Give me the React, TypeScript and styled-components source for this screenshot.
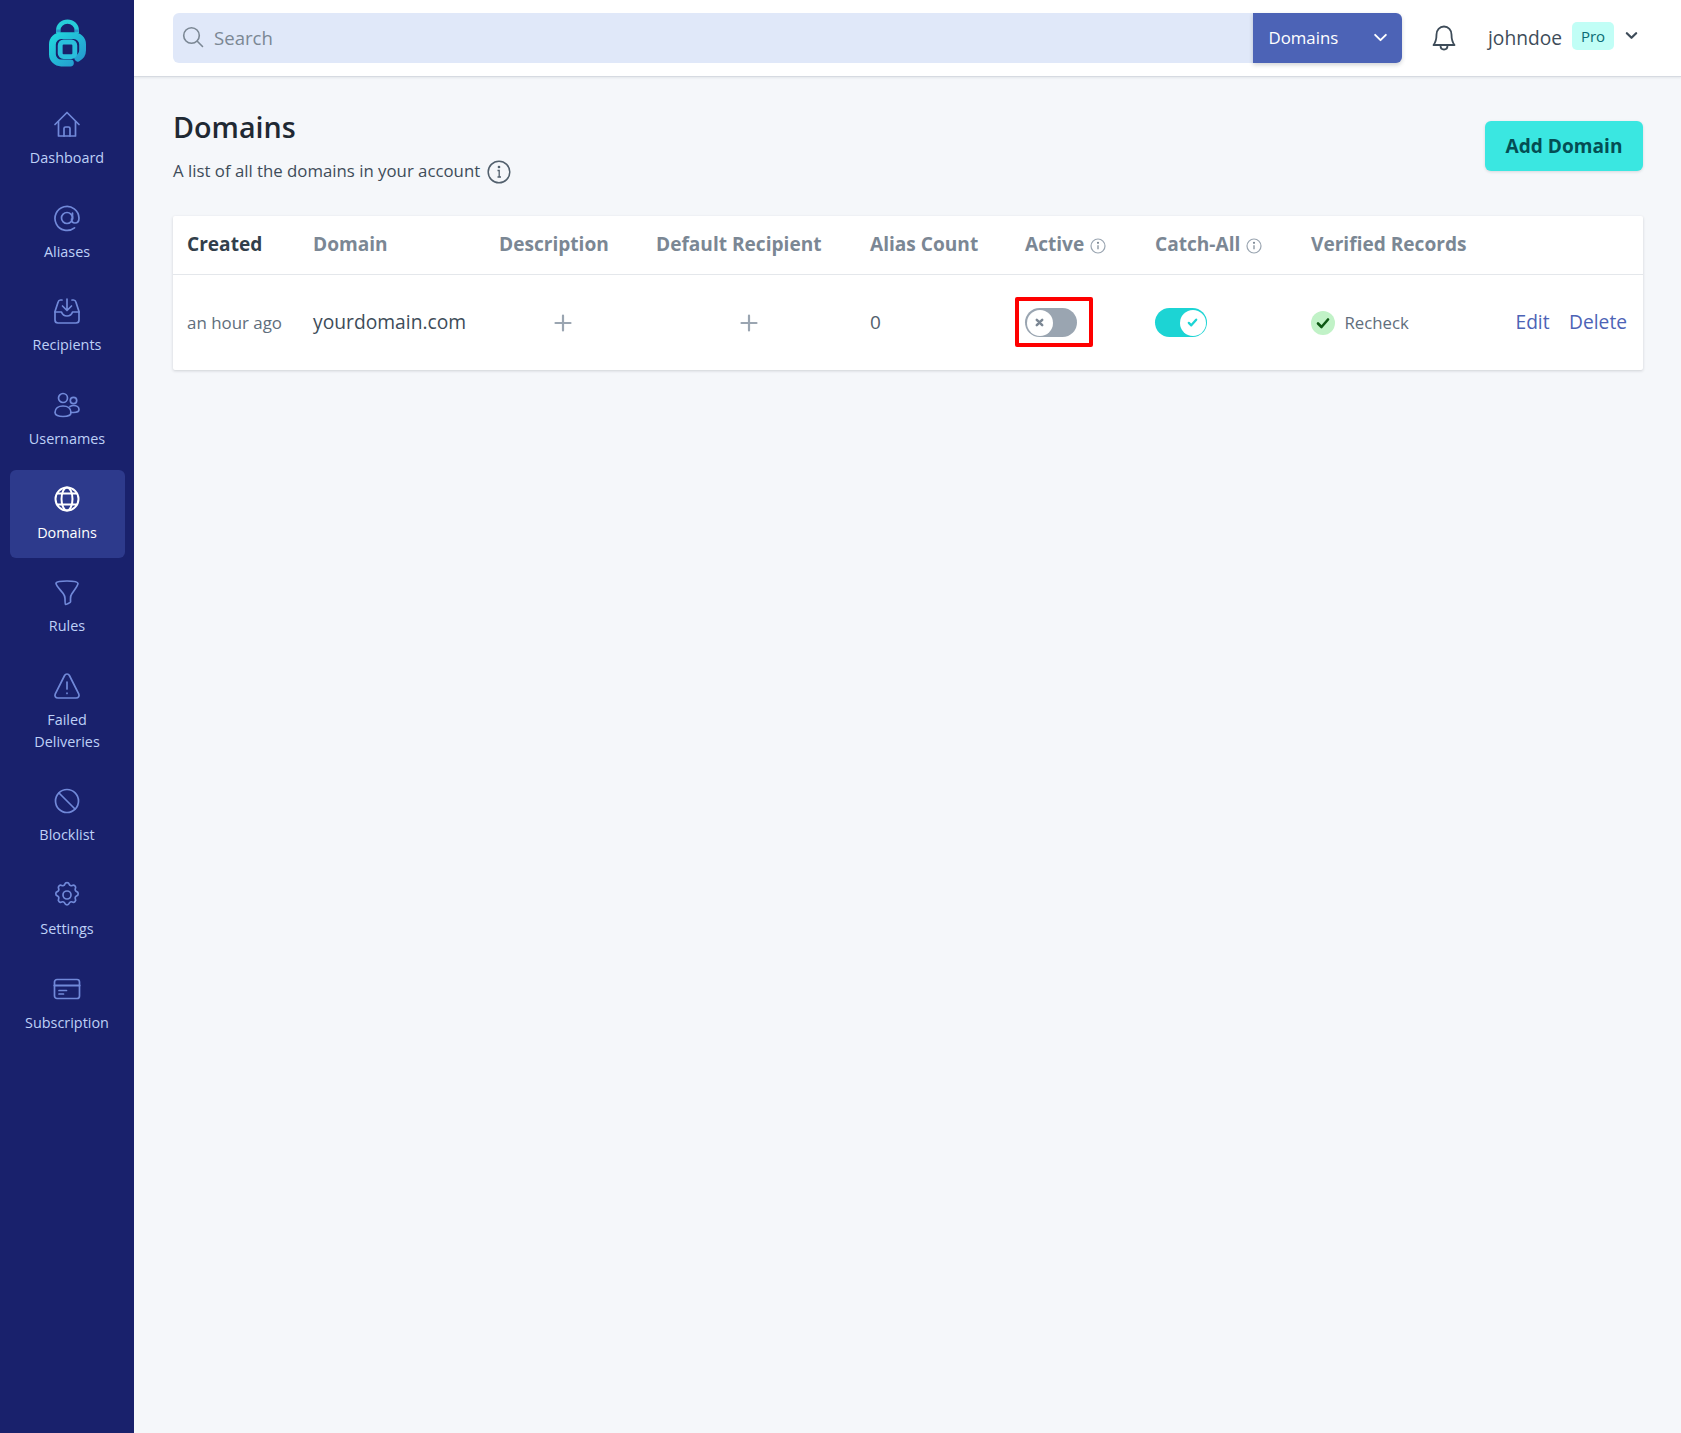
import React from "react";
import styled, { createGlobalStyle } from "styled-components";

const GlobalStyle = createGlobalStyle`
  html, body { margin: 0; padding: 0; background: #f5f7fa; }
  body { font-family: "Open Sans", "Liberation Sans", sans-serif; color: #1f2933; }
  * { box-sizing: border-box; }
`;

const line = { fill: "none", stroke: "currentColor", strokeWidth: 1.7, strokeLinecap: "round", strokeLinejoin: "round" } as const;

const NavIcon = ({ children }: { children: React.ReactNode }) => (
  <svg width="28" height="28" viewBox="0 0 28 28" {...line}>{children}</svg>
);

const navItems: { label: string; icon: React.ReactNode; active?: boolean }[] = [
  { label: "Dashboard", icon: <><path d="M2 14.500 14 2.500l12 12" /><path d="M5.500 11.500V26h17V11.500" /><path d="M11 26v-7.500a1.500 1.500 0 0 1 1.500-1.500h3a1.500 1.500 0 0 1 1.500 1.500V26" /></> },
  { label: "Aliases", icon: <><path d="M21.500 23.800A12 12 0 1 1 26 14c0 3-1.600 5-4 5s-3.500-1.600-3.500-4" /><circle cx="14" cy="14" r="5.500" /><path d="M19.500 9v6" /></> },
  { label: "Recipients", icon: <><path d="M9 3H7.500A2.500 2.500 0 0 0 5.200 4.800L2 14.500V23a3 3 0 0 0 3 3h18a3 3 0 0 0 3-3v-8.500L22.800 4.800A2.500 2.500 0 0 0 20.500 3H19" /><path d="M2 15h6.500c1 3 3 4 5.500 4s4.500-1 5.500-4H26" /><path d="M14 2v11M9.500 9l4.500 4.500L18.500 9" /></> },
  { label: "Usernames", icon: <><circle cx="10" cy="7" r="4.500" /><circle cx="20.500" cy="9.500" r="3.200" /><path d="M2 21.500c0-4 3.500-6.500 8-6.500s8 2.500 8 6.500c0 2.500-3.500 4-8 4s-8-1.500-8-4Z" /><path d="M17 15.500c1-.6 2.300-1 3.500-1 3.300 0 5.500 1.800 5.500 4 0 1.800-2.200 3-5.500 3h-2.800" /></> },
  { label: "Domains", active: true, icon: <><circle cx="14" cy="14" r="11.500" strokeWidth="2" /><ellipse cx="14" cy="14" rx="5.500" ry="11.500" strokeWidth="2" /><path d="M4.500 8.500h19M4.500 19.500h19" strokeWidth="2" /></> },
  { label: "Rules", icon: <path d="M3 5.500C3 3.500 8 3 14 3s11 .5 11 2.500c0 2-3.500 6.500-6 10-1.300 1.800-1.500 3-1.500 5v3.500c0 .8-4.300 2.500-5 2.500-.5 0-.5-1-.5-6 0-2-.5-3.200-1.800-5C7.500 12 3 7.500 3 5.500Z" /> },
  { label: "Failed Deliveries", icon: <><path d="M11.600 3.500 2.300 21.800C1.300 24 2.500 26 5 26h18c2.500 0 3.700-2 2.700-4.200L16.400 3.500c-1-2-3.800-2-4.800 0Z" /><path d="M14 10v7M14 21v.5" /></> },
  { label: "Blocklist", icon: <><circle cx="14" cy="14" r="11.500" /><path d="m6 6 16 16" /></> },
  { label: "Settings", icon: <><path d="M11.800 2.800c.6-2 3.800-2 4.400 0 .4 1.300 1.900 1.900 3.100 1.300 1.900-1 4.100 1.100 3.100 3-.6 1.200 0 2.700 1.300 3.100 2 .6 2 3.700 0 4.300-1.300.4-1.900 1.900-1.300 3.100 1 1.900-1.200 4-3.100 3-1.200-.6-2.700 0-3.100 1.300-.6 2-3.800 2-4.400 0-.4-1.300-1.900-1.900-3.100-1.300-1.900 1-4.100-1.100-3.100-3 .6-1.200 0-2.700-1.300-3.100-2-.6-2-3.700 0-4.300 1.300-.4 1.900-1.900 1.300-3.100-1-1.900 1.200-4 3.100-3 1.200.6 2.700 0 3.100-1.300Z" transform="translate(0 .4)" /><circle cx="14" cy="14" r="4" /></> },
  { label: "Subscription", icon: <><rect x="1.500" y="4.500" width="25" height="19" rx="2.500" /><path d="M1.500 10.500h25" strokeWidth="2.200" /><path d="M6 15.500h7.500M6 19h4.500" /></> },
];

const Shell = styled.div`
  display: flex;
  min-height: 1433px;
`;

const Sidebar = styled.aside`
  width: 134px;
  flex-shrink: 0;
  background: #19216c;
  padding: 0 9.500px;
`;

const LogoWrap = styled.div`
  display: flex;
  justify-content: center;
  padding-top: 19px;
  height: 95px;
`;

const NavList = styled.nav`
  display: flex;
  flex-direction: column;
  gap: 5.700px;
`;

const NavItem = styled.a<{ $active?: boolean }>`
  display: flex;
  flex-direction: column;
  align-items: center;
  padding: 15px 6px 14.500px;
  border-radius: 6px;
  text-align: center;
  font-size: 14.400px;
  line-height: 21.500px;
  background: ${(p) => (p.$active ? "#2d3a8c" : "transparent")};
  color: ${(p) => (p.$active ? "#ffffff" : "#bed0f7")};
  svg {
    color: ${(p) => (p.$active ? "#ffffff" : "#7189d9")};
    margin-bottom: 9px;
    display: block;
  }
`;

const Main = styled.div`
  flex: 1;
  min-width: 0;
`;

const Topbar = styled.header`
  height: 77px;
  background: #fff;
  border-bottom: 1px solid #d6dae1;
  box-shadow: 0 1px 2px rgba(31, 41, 51, 0.08);
  display: flex;
  align-items: center;
  padding: 0 43px 0 39px;
`;

const SearchBox = styled.div`
  flex: 1;
  height: 50px;
  display: flex;
  align-items: center;
  background: #e0e8f9;
  border-radius: 6px 0 0 6px;
  padding: 0 0 2px 9px;
  gap: 10px;
  color: #7b8794;
  font-size: 18.600px;
`;

const ScopeButton = styled.div`
  width: 149px;
  height: 50px;
  flex-shrink: 0;
  background: #4c63b6;
  color: #fff;
  border-radius: 0 6px 6px 0;
  box-shadow: 0 2px 4px rgba(31, 41, 51, 0.2);
  display: flex;
  align-items: center;
  justify-content: space-between;
  padding: 0 14px 2px 16px;
  font-size: 16.800px;
`;

const Bell = styled.div`
  margin-left: 30px;
  color: #3e4c59;
  display: flex;
`;

const UserMenu = styled.div`
  margin: -2px 0 0 32.500px;
  display: flex;
  align-items: center;
  color: #3e4c59;
  font-size: 19.200px;
`;

const ProBadge = styled.span`
  margin-left: 10px;
  margin-top: -2px;
  width: 42px;
  height: 28px;
  border-radius: 5px;
  background: #c1fef6;
  color: #0a6c74;
  font-size: 15px;
  display: flex;
  align-items: center;
  justify-content: center;
`;

const UserCaret = styled.div`
  display: flex;
  margin: -4px 0 0 11px;
  color: #3e4c59;
`;

const Content = styled.main`
  padding: 30px 38px 0 39px;
`;

const PageHead = styled.div`
  display: flex;
  justify-content: space-between;
  align-items: flex-start;
`;

const Title = styled.h1`
  margin: 0;
  font-size: 28.700px;
  line-height: 40px;
  font-weight: 600;
  color: #1f2933;
`;

const Subtitle = styled.p`
  margin: 11.300px 0 0;
  display: flex;
  align-items: center;
  gap: 7px;
  font-size: 16.800px;
  line-height: 24px;
  color: #3e4c59;
`;

const AddButton = styled.button`
  margin-top: 13.500px;
  width: 158px;
  height: 50px;
  border: none;
  border-radius: 6px;
  background: #3ae7e1;
  color: #044e54;
  font-family: inherit;
  font-size: 19.100px;
  font-weight: 700;
  box-shadow: 0 1px 3px rgba(31, 41, 51, 0.15);
`;

const Card = styled.section`
  margin-top: 32px;
  background: #fff;
  box-shadow: 0 1px 3px rgba(31, 41, 51, 0.18);
  border-radius: 2px;
`;

const columns = "126px 186px 157px 214px 155px 130px 156px 1fr auto";

const HeadRow = styled.div`
  display: grid;
  grid-template-columns: ${columns};
  align-items: center;
  height: 59px;
  padding: 0 16px 2px 14px;
  border-bottom: 1px solid #e4e7eb;
`;

const BodyRow = styled.div`
  display: grid;
  grid-template-columns: ${columns};
  align-items: center;
  height: 95px;
  padding: 0 16px 0 14px;
`;

const HeadCell = styled.div<{ $sorted?: boolean }>`
  display: flex;
  align-items: center;
  gap: 6px;
  font-size: 19.100px;
  font-weight: 700;
  white-space: nowrap;
  color: ${(p) => (p.$sorted ? "#323f4b" : "#7b8794")};
`;

const Muted = styled.div`
  font-size: 16.900px;
  color: #616e7c;
`;

const DomainName = styled.div`
  font-size: 19.250px;
  color: #3e4c59;
  padding-bottom: 2px;
`;

const AddCell = styled.div<{ $offset: number }>`
  display: flex;
  padding-left: ${(p) => p.$offset}px;
  color: #9aa5b1;
`;

const Count = styled.div`
  font-size: 19px;
  color: #52606d;
  padding-bottom: 2px;
`;

const Highlight = styled.div`
  position: relative;
  display: flex;
`;

const RedBox = styled.div`
  position: absolute;
  left: -10px;
  top: -11px;
  width: 78px;
  height: 50px;
  border: 4px solid #fe0000;
  border-radius: 2px;
`;

const Toggle = styled.div<{ $on?: boolean }>`
  width: 52px;
  height: 29px;
  border-radius: 15px;
  background: ${(p) => (p.$on ? "#1cd4d4" : "#9aa5b1")};
  padding: 1.500px;
  display: flex;
  justify-content: ${(p) => (p.$on ? "flex-end" : "flex-start")};
`;

const Knob = styled.div`
  width: 26px;
  height: 26px;
  border-radius: 50%;
  background: #fff;
  display: flex;
  align-items: center;
  justify-content: center;
`;

const RecheckCell = styled.div`
  display: flex;
  align-items: center;
  gap: 9.500px;
  font-size: 16.800px;
  color: #616e7c;
`;

const CheckBadge = styled.span`
  width: 24px;
  height: 24px;
  border-radius: 50%;
  background: #c1f2c7;
  display: flex;
  align-items: center;
  justify-content: center;
  margin-top: 1px;
`;

const Actions = styled.div`
  display: flex;
  gap: 19.500px;
  font-size: 19.200px;
  color: #4c63b6;
  padding-bottom: 2px;
`;

const InfoSmall = () => (
  <svg width="16" height="16" viewBox="0 0 16 16" fill="none" stroke="#9aa5b1" strokeWidth="1.200" style={{ marginTop: 4 }}>
    <circle cx="8" cy="8" r="7" />
    <path d="M8 7.200v4" stroke="#7b8794" />
    <circle cx="8" cy="4.800" r=".5" stroke="#7b8794" />
  </svg>
);

const Plus = () => (
  <svg width="18" height="18" viewBox="0 0 18 18" stroke="currentColor" strokeWidth="2.200" strokeLinecap="round">
    <path d="M9 1.500v15M1.500 9h15" />
  </svg>
);

const Chevron = ({ size, width }: { size: number; width: number }) => (
  <svg width={size} height={size} viewBox="0 0 14 14" fill="none" stroke="currentColor" strokeWidth={width} strokeLinecap="round" strokeLinejoin="round">
    <path d="m2 4.500 5 5 5-5" />
  </svg>
);

export default function App() {
  return (
    <>
      <GlobalStyle />
      <Shell>
        <Sidebar>
          <LogoWrap>
            <svg width="37" height="49" viewBox="0 0 38 49">
              <defs>
                <linearGradient id="logoGrad" x1="0" y1="0" x2="1" y2="1">
                  <stop offset="0" stopColor="#21d5dc" />
                  <stop offset="1" stopColor="#2598cf" />
                </linearGradient>
              </defs>
              <path d="M9.500 14V11a9.500 9 0 0 1 19 0v3" fill="none" stroke="#27cdd9" strokeWidth="4.500" />
              <path d="M22 44.500H12.500a9 9 0 0 1-9-9V25.500a9 9 0 0 1 9-9h13a9 9 0 0 1 9 9v6a9 9 0 0 1-5 8" fill="none" stroke="url(#logoGrad)" strokeWidth="7" strokeLinecap="round" />
              <path d="M7.500 11.500h4M26.500 11.500h4" stroke="#2a93c9" strokeWidth="3" />
              <rect x="11.500" y="23" width="15" height="15" rx="3.500" fill="none" stroke="#2abfdc" strokeWidth="5" />
              <rect x="16" y="27.500" width="6" height="6" fill="#19216c" />
            </svg>
          </LogoWrap>
          <NavList>
            {navItems.map((item) => (
              <NavItem key={item.label} $active={item.active}>
                <NavIcon>{item.icon}</NavIcon>
                {item.label === "Failed Deliveries" ? <span>Failed<br />Deliveries</span> : item.label}
              </NavItem>
            ))}
          </NavList>
        </Sidebar>
        <Main>
          <Topbar>
            <SearchBox>
              <svg width="22" height="22" viewBox="0 0 22 22" fill="none" stroke="#7b8794" strokeWidth="1.600" strokeLinecap="round">
                <circle cx="9.500" cy="9.500" r="7.800" />
                <path d="m15.300 15.300 5.200 5.200" />
              </svg>
              Search
            </SearchBox>
            <ScopeButton>
              Domains
              <Chevron size={15} width={1.800} />
            </ScopeButton>
            <Bell>
              <svg width="24" height="26" viewBox="0 0 24 26" fill="none" stroke="currentColor" strokeWidth="1.800" strokeLinecap="round" strokeLinejoin="round">
                <path d="M12 1.500c-4.400 0-7.500 3.400-7.500 8 0 5.500-.6 7.500-3 10.500h21c-2.400-3-3-5-3-10.500 0-4.600-3.100-8-7.500-8Z" />
                <path d="M8.500 20.500c0 2.500 1.500 4 3.500 4s3.500-1.500 3.500-4" />
              </svg>
            </Bell>
            <UserMenu>
              johndoe
              <ProBadge>Pro</ProBadge>
              <UserCaret><Chevron size={13} width={2.400} /></UserCaret>
            </UserMenu>
          </Topbar>
          <Content>
            <PageHead>
              <div>
                <Title>Domains</Title>
                <Subtitle>
                  A list of all the domains in your account
                  <svg width="24" height="24" viewBox="0 0 24 24" fill="none" stroke="#52606d" strokeWidth="1.500" style={{ marginTop: 2 }}>
                    <circle cx="12" cy="12" r="10.800" />
                    <path d="M10.500 10.500H12.200v6.500M10.500 17h3.500" strokeWidth="1.300" />
                    <circle cx="12" cy="7" r=".6" />
                  </svg>
                </Subtitle>
              </div>
              <AddButton>Add Domain</AddButton>
            </PageHead>
            <Card>
              <HeadRow>
                <HeadCell $sorted>Created</HeadCell>
                <HeadCell>Domain</HeadCell>
                <HeadCell>Description</HeadCell>
                <HeadCell>Default Recipient</HeadCell>
                <HeadCell>Alias Count</HeadCell>
                <HeadCell>Active <InfoSmall /></HeadCell>
                <HeadCell>Catch-All <InfoSmall /></HeadCell>
                <HeadCell>Verified Records</HeadCell>
                <HeadCell />
              </HeadRow>
              <BodyRow>
                <Muted>an hour ago</Muted>
                <DomainName>yourdomain.com</DomainName>
                <AddCell $offset={55}><Plus /></AddCell>
                <AddCell $offset={84}><Plus /></AddCell>
                <Count>0</Count>
                <Highlight>
                  <Toggle>
                    <Knob>
                      <svg width="9" height="9" viewBox="0 0 10 10" stroke="#7b8794" strokeWidth="2.800" strokeLinecap="round">
                        <path d="m2 2 6 6M8 2 2 8" />
                      </svg>
                    </Knob>
                  </Toggle>
                  <RedBox />
                </Highlight>
                <Toggle $on>
                  <Knob>
                    <svg width="11" height="9" viewBox="0 0 13 11" fill="none" stroke="#1cd4d4" strokeWidth="2.800" strokeLinecap="round" strokeLinejoin="round">
                      <path d="m2 6 3 3 6-7" />
                    </svg>
                  </Knob>
                </Toggle>
                <RecheckCell>
                  <CheckBadge>
                    <svg width="14" height="12" viewBox="0 0 14 12" fill="none" stroke="#0e5814" strokeWidth="2.600" strokeLinecap="round" strokeLinejoin="round">
                      <path d="m2 6.500 3.500 3.500L12 2.500" />
                    </svg>
                  </CheckBadge>
                  Recheck
                </RecheckCell>
                <Actions>
                  <span>Edit</span>
                  <span>Delete</span>
                </Actions>
              </BodyRow>
            </Card>
          </Content>
        </Main>
      </Shell>
    </>
  );
}
